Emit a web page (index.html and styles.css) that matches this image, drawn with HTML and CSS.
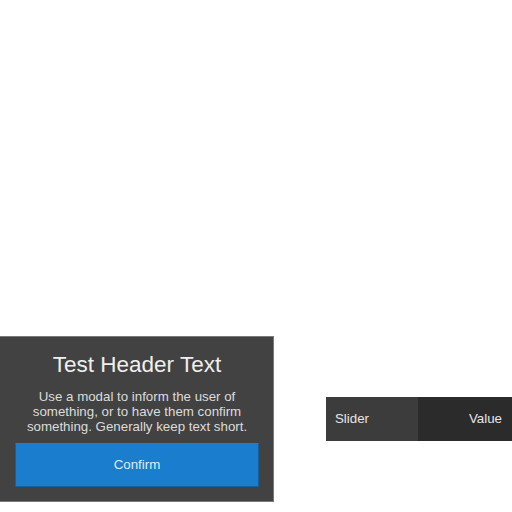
FILE: index.html
```html
<!DOCTYPE html>
<html>
<head>
<meta charset="utf-8">
<link rel="stylesheet" href="styles.css">
</head>
<body>
<div class="stage">
  <div class="modal">
    <h1 class="modal-title">Test Header Text</h1>
    <p class="modal-body">Use a modal to inform the user of something, or to have them confirm something. Generally keep text short.</p>
    <button class="modal-btn">Confirm</button>
  </div>
  <div class="slider">
    <div class="slider-label">Slider</div>
    <div class="slider-value">Value</div>
  </div>
</div>
</body>
</html>
```
FILE: styles.css
```css
html, body {
  margin: 0;
  padding: 0;
  background: #ffffff;
  width: 512px;
  height: 512px;
  overflow: hidden;
  font-family: "Liberation Sans", Arial, sans-serif;
}
.stage {
  display: flex;
  align-items: flex-start;
  padding-top: 336px;
}
.modal {
  box-sizing: border-box;
  width: 274px;
  height: 166px;
  background: #424242;
  border: 1px solid #7a7a7a;
  border-left: none;
  padding: 14px 14px 14px 15px;
  display: flex;
  flex-direction: column;
  align-items: stretch;
}
.modal-title {
  margin: 1px 0 0 0;
  font-weight: normal;
  font-size: 22.5px;
  line-height: 26px;
  color: #efefef;
  text-align: center;
}
.modal-body {
  margin: 11px 0 0 0;
  font-size: 13.3px;
  line-height: 15px;
  color: #dcdcdc;
  text-align: center;
  padding: 0;
}
.modal-btn {
  margin-top: auto;
  height: 44px;
  background: #1a7dcd;
  border: 1px solid #165f9c;
  border-top-color: #1a7dcd;
  color: #dfeefb;
  font-family: inherit;
  font-size: 13.3px;
  padding: 0 0 2px 0;
}
.slider {
  margin-left: 52px;
  margin-top: 61px;
  width: 186px;
  height: 44px;
  display: flex;
  font-size: 13.3px;
  color: #e6e6e6;
}
.slider-label {
  width: 92px;
  background: #3c3c3c;
  display: flex;
  align-items: center;
  padding: 0 0 2px 9px;
  box-sizing: border-box;
}
.slider-value {
  flex: 1;
  background: #2b2b2b;
  display: flex;
  align-items: center;
  justify-content: flex-end;
  padding: 0 10px 2px 0;
}
```
